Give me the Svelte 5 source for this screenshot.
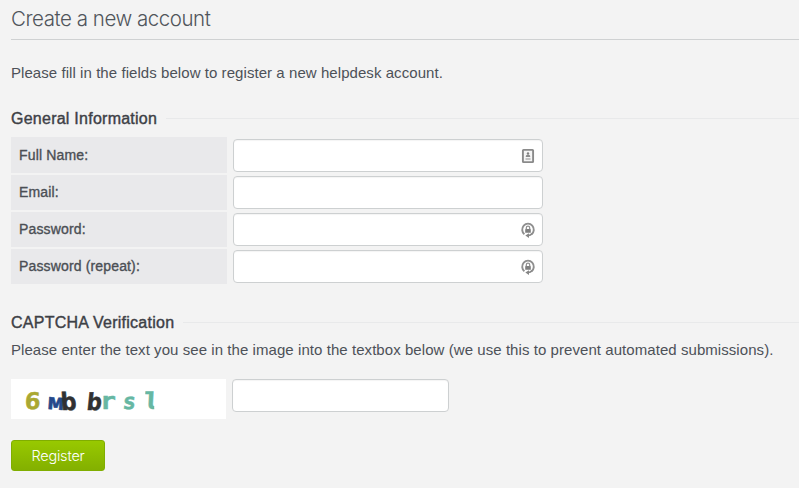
<script>
  let fields = $state([
    { label: 'Full Name:', type: 'text', icon: 'card', value: '' },
    { label: 'Email:', type: 'text', icon: '', value: '' },
    { label: 'Password:', type: 'password', icon: 'lock', value: '' },
    { label: 'Password (repeat):', type: 'password', icon: 'lock', value: '' }
  ]);
  let answer = $state('');
</script>

<main>
  <h1><span>Create a new account</span></h1>
  <p class="intro">Please fill in the fields below to register a new helpdesk account.</p>

  <h2 class="general"><span>General Information</span></h2>
  <div class="fields">
    {#each fields as field}
      <label class="row">
        <span class="name"><span>{field.label}</span></span>
        <span class="control">
          <input type={field.type} bind:value={field.value} />
          {#if field.icon === 'card'}
            <svg class="icon" width="14" height="16" viewBox="0 0 14 16">
              <rect x="1.900" y="1.900" width="10.200" height="12.200" rx="0.6" fill="#f5f5f5" stroke="#8a8a8a" stroke-width="1.900" />
              <circle cx="7" cy="5.500" r="1.200" fill="#808080" />
              <path d="M4.800 9V8Q5 6.700 7 6.700T9.200 8V9Z" fill="#8c8c8c" />
              <path d="M4.500 11H9.500" stroke="#b0b0b0" stroke-width="1.500" />
            </svg>
          {:else if field.icon === 'lock'}
            <svg class="icon" width="14" height="16" viewBox="0 0 14 16">
              <path d="M3.400 12.300A5.800 6 0 1 1 10.600 12.300" fill="none" stroke="#8f8f8f" stroke-width="1.900" />
              <path d="M11 11.600Q9.500 13.300 7.400 13.500" fill="none" stroke="#888" stroke-width="1.700" />
              <path d="M8 11.300V16L4.300 13.600Z" fill="#868686" />
              <rect x="4.200" y="7" width="5.600" height="3.800" rx="0.4" fill="#7f7f7f" />
              <path d="M5.300 7.200V5.900A1.700 1.700 0 0 1 8.700 5.900V7.200" fill="none" stroke="#929292" stroke-width="1.300" />
            </svg>
          {/if}
        </span>
      </label>
    {/each}
  </div>

  <h2 class="verify"><span>CAPTCHA Verification</span></h2>
  <p class="hint">Please enter the text you see in the image into the textbox below (we use this to prevent automated submissions).</p>
  <div class="captcha">
    <svg class="code" width="215" height="40" viewBox="0 0 215 40">
      <clipPath id="stem"><rect x="134" y="12" width="9.200" height="20" /></clipPath>
      <g class="glyphs">
        <text transform="translate(13.300 30) skewX(-3) scale(1.160 1)" font-size="23" fill="#aaa832" stroke="#aaa832">6</text>
        <text transform="translate(36.500 30) rotate(4) scale(1.200 1)" font-size="22" fill="#24498b" stroke="#24498b">м</text>
        <text transform="translate(50.300 31) skewX(4) scale(1.100 1)" font-size="24" fill="#303133" stroke="#303133">b</text>
        <text transform="translate(75 30.500) skewX(-6) scale(1.080 1)" font-size="23.500" fill="#303133" stroke="#303133">b</text>
        <text transform="translate(89 30) scale(1.150 1)" font-size="23" fill="#66b7a3" stroke="#66b7a3">r</text>
        <text transform="translate(111 30) skewX(-7)" font-size="22" fill="#66b7a3" stroke="#66b7a3">s</text>
        <g clip-path="url(#stem)">
          <text transform="translate(132.500 30) skewX(-3) scale(1.150 1)" font-size="23" fill="#66b7a3" stroke="#66b7a3">l</text>
        </g>
      </g>
    </svg>
    <input aria-label="CAPTCHA" bind:value={answer} />
  </div>
  <button type="button">Register</button>
</main>

<style>
  :global(body) { background: #f3f3f3; overflow: hidden; }
  main {
    box-sizing: border-box;
    height: 488px;
    padding-left: 11px;
    overflow: hidden;
    background: #f3f3f3;
    color: #4d5158;
    font: 15px/20px "Liberation Sans", Arial, sans-serif;
  }
  h1, h2, p { margin: 0; white-space: nowrap; }
  h1 {
    height: 39px;
    border-bottom: 1px solid #cfd1d2;
    font: 300 20.5px/38px Inter, sans-serif;
    letter-spacing: -0.46px;
    color: #50555b;
  }
  p { letter-spacing: 0.062px; }
  .intro { margin-top: 23px; }
  h2 {
    display: flex;
    align-items: center;
    height: 20px;
    font-size: 16px;
    font-weight: 400;
    letter-spacing: 0.25px;
    color: #3d4046;
    -webkit-text-stroke: 0.4px #3d4046;
  }
  h2 span { padding-top: 2px; }
  h2::after {
    content: "";
    flex: 1;
    height: 1px;
    margin-left: 9px;
    background: #e8e9ea;
  }
  .general { margin-top: 25px; }
  .fields { margin-top: 9px; height: 147px; }
  .row { display: flex; height: 37px; }
  .name {
    box-sizing: border-box;
    width: 216px;
    height: 35px;
    margin-top: 1px;
    padding-left: 8px;
    background: #e9e9eb;
    color: #4b4f55;
    font-size: 14px;
    line-height: 34px;
    letter-spacing: 0.15px;
    -webkit-text-stroke: 0.35px #4b4f55;
  }
  .row:first-child .name { height: 36px; margin-top: 0; line-height: 36px; }
  .control { position: relative; margin: 2px 0 0 6px; }
  input {
    box-sizing: border-box;
    display: block;
    width: 310px;
    height: 33px;
    padding: 4px 8px;
    border: 1px solid #cdd0d1;
    border-radius: 4px;
    background: #fff;
    box-shadow: inset 0 1px 1px #f4f4f4;
    font: inherit;
  }
  .icon { position: absolute; left: 288px; top: 9px; }
  .verify { margin-top: 28px; }
  .hint { margin-top: 8px; }
  .captcha { display: flex; margin-top: 19px; }
  .captcha input { width: 217px; margin-left: 6px; }
  .code { background: #fff; }
  .glyphs {
    font-family: "DejaVu Sans Mono", monospace;
    font-weight: bold;
    stroke-width: 0.5px;
    stroke-linejoin: miter;
  }
  button {
    display: block;
    width: 94px;
    height: 31px;
    margin-top: 21px;
    padding: 0;
    border: 1px solid #80ae00;
    border-radius: 3px;
    background: linear-gradient(#98c900, #83b000);
    color: #fff;
    font: 300 14.5px/30px Inter, sans-serif;
    letter-spacing: -0.2px;
  }
</style>
